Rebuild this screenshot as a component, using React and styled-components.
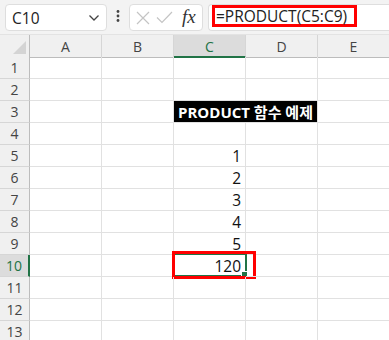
import React from "react";
import styled, { createGlobalStyle } from "styled-components";

const GlobalStyle = createGlobalStyle`
  body {
    margin: 0;
    background: #ffffff;
    font-family: "Open Sans", "Noto Sans CJK KR", sans-serif;
    overflow: hidden;
  }
`;

const Page = styled.div`
  width: 389px;
  height: 340px;
  overflow: hidden;
  background: #ffffff;
`;

const FormulaBar = styled.div`
  height: 35px;
  box-sizing: border-box;
  padding: 4px 0 0 5px;
  display: flex;
  align-items: flex-start;
  background: #f3f3f3;
  border-bottom: 1px solid #e3e3e3;
`;

const NameBox = styled.div`
  width: 102px;
  height: 27px;
  box-sizing: border-box;
  border: 1px solid #dedede;
  border-radius: 4px;
  background: #ffffff;
  display: flex;
  align-items: center;
  justify-content: space-between;
  padding: 0 6px 0 6px;
  font-size: 15.5px;
  color: #222;
`;

const Dots = styled.div`
  width: 22px;
  display: flex;
  justify-content: center;
  padding-top: 6px;
`;

const FxBox = styled.div`
  width: 74px;
  height: 27px;
  box-sizing: border-box;
  border: 1px solid #dedede;
  border-radius: 4px;
  background: #ffffff;
  display: flex;
  align-items: center;
  gap: 6px;
  padding: 0 4px 0 6px;
`;

const Fx = styled.span`
  font-family: "Liberation Serif", serif;
  font-style: italic;
  font-size: 19px;
  color: #333;
  margin-left: 3px;
  margin-top: -2px;
`;

const FormulaInput = styled.div`
  flex: 1;
  margin-left: 5px;
  height: 27px;
  box-sizing: border-box;
  border: 1px solid #dedede;
  border-right: none;
  border-radius: 4px 0 0 4px;
  background: #ffffff;
  padding: 0 0 0 3px;
`;

const Highlight = styled.div`
  display: inline-flex;
  align-items: center;
  height: 22px;
  box-sizing: border-box;
  border: 3px solid #ff0000;
  padding: 0 0 0 1px;
  width: 145px;
  font-size: 15.5px;
  color: #222;
  margin-top: -1px;
`;

const Grid = styled.div`
  display: grid;
  grid-template-columns: 30px repeat(5, 72px);
  grid-auto-rows: 22px;
`;

const ColHead = styled.div`
  height: 23px;
  box-sizing: border-box;
  background: ${(p) => (p.$active ? "#dcdcdc" : "#f0f0f0")};
  border-right: 1px solid #d6d6d6;
  border-bottom: ${(p) => (p.$active ? "2px solid #217346" : "1px solid #bcbcbc")};
  color: ${(p) => (p.$active ? "#217346" : "#444")};
  font-size: 14px;
  display: flex;
  align-items: center;
  justify-content: center;
  padding-top: ${(p) => (p.$active ? "1px" : "0")};
`;

const Corner = styled.div`
  height: 23px;
  box-sizing: border-box;
  background: #f0f0f0;
  border-right: 1px solid #bcbcbc;
  border-bottom: 1px solid #bcbcbc;
  display: flex;
  align-items: flex-end;
  justify-content: flex-end;
  padding: 0 3px 3px 0;
`;

const RowHead = styled.div`
  box-sizing: border-box;
  background: ${(p) => (p.$active ? "#dcdcdc" : "#f0f0f0")};
  border-right: ${(p) => (p.$active ? "2px solid #217346" : "1px solid #bcbcbc")};
  border-bottom: 1px solid #d6d6d6;
  color: ${(p) => (p.$active ? "#217346" : "#444")};
  font-size: 14px;
  display: flex;
  align-items: center;
  justify-content: center;
`;

const Cell = styled.div`
  position: relative;
  box-sizing: border-box;
  border-right: 1px solid #e1e1e1;
  border-bottom: 1px solid #e1e1e1;
  font-size: 15.5px;
  color: #111;
  display: flex;
  align-items: center;
  justify-content: flex-end;
  padding: 1px 4px 0 0;
`;

const TitleCell = styled.div`
  grid-column: span 2;
  box-sizing: border-box;
  background: #000000;
  border-bottom: 1px solid #e1e1e1;
  border-right: 1px solid #e1e1e1;
  color: #ffffff;
  font-weight: 700;
  font-size: 15px;
  display: flex;
  align-items: center;
  justify-content: center;
  white-space: nowrap;
`;

const Selection = styled.div`
  position: absolute;
  left: -1px;
  top: -2px;
  width: 74px;
  height: 24px;
  box-sizing: border-box;
  border: 2px solid #217346;
  pointer-events: none;
`;

const Handle = styled.div`
  position: absolute;
  right: -3px;
  bottom: -3px;
  width: 5px;
  height: 5px;
  background: #217346;
  border: 1px solid #ffffff;
`;

const RedBox = styled.div`
  position: absolute;
  left: -2px;
  top: -4px;
  width: 84px;
  height: 28px;
  box-sizing: border-box;
  border: 3px solid #ff0000;
  pointer-events: none;
`;

const cols = ["A", "B", "C", "D", "E"];
const values = { 5: "1", 6: "2", 7: "3", 8: "4", 9: "5", 10: "120" };

const Chevron = () => (
  <svg width="12" height="8" viewBox="0 0 12 8">
    <path d="M1.5 1.5 L6 6 L10.5 1.5" fill="none" stroke="#444" strokeWidth="1.3" />
  </svg>
);

const VDots = () => (
  <svg width="4" height="12" viewBox="0 0 4 12">
    <circle cx="2" cy="1.5" r="1.4" fill="#444" />
    <circle cx="2" cy="6" r="1.4" fill="#444" />
    <circle cx="2" cy="10.5" r="1.4" fill="#444" />
  </svg>
);

const Cross = () => (
  <svg width="14" height="14" viewBox="0 0 14 14">
    <path d="M1 1 L13 13 M13 1 L1 13" stroke="#c4c4c4" strokeWidth="1.2" />
  </svg>
);

const Check = () => (
  <svg width="17" height="13" viewBox="0 0 17 13">
    <path d="M1 6.5 L6 11.5 L16 1" fill="none" stroke="#c4c4c4" strokeWidth="1.2" />
  </svg>
);

const CornerTri = () => (
  <svg width="13" height="13" viewBox="0 0 13 13">
    <path d="M13 0 L13 13 L0 13 Z" fill="#d4d4d4" />
  </svg>
);

export default function App() {
  const rows = Array.from({ length: 13 }, (_, i) => i + 1);
  return (
    <Page>
      <GlobalStyle />
      <FormulaBar>
        <NameBox>
          <span>C10</span>
          <Chevron />
        </NameBox>
        <Dots>
          <VDots />
        </Dots>
        <FxBox>
          <Cross />
          <Check />
          <Fx>fx</Fx>
        </FxBox>
        <FormulaInput>
          <Highlight>=PRODUCT(C5:C9)</Highlight>
        </FormulaInput>
      </FormulaBar>
      <Grid>
        <Corner>
          <CornerTri />
        </Corner>
        {cols.map((c) => (
          <ColHead key={c} $active={c === "C"}>
            {c}
          </ColHead>
        ))}
        {rows.map((r) => (
          <React.Fragment key={r}>
            <RowHead $active={r === 10}>{r}</RowHead>
            {r === 3 ? (
              <>
                <Cell />
                <Cell />
                <TitleCell>PRODUCT 함수 예제</TitleCell>
                <Cell />
              </>
            ) : (
              cols.map((c) => (
                <Cell key={c}>
                  {c === "C" && values[r]}
                  {c === "C" && r === 10 && (
                    <>
                      <Selection>
                        <Handle />
                      </Selection>
                      <RedBox />
                    </>
                  )}
                </Cell>
              ))
            )}
          </React.Fragment>
        ))}
      </Grid>
    </Page>
  );
}
